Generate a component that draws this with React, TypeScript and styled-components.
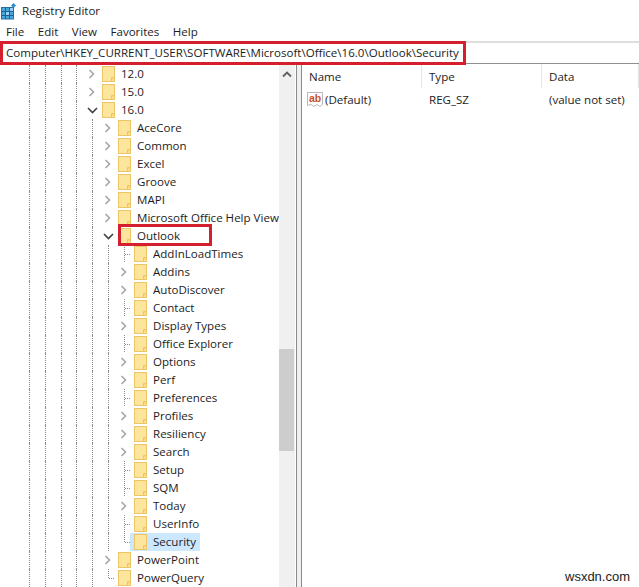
import React from "react";
import styled, { createGlobalStyle } from "styled-components";

const Global = createGlobalStyle`
  html, body { margin: 0; padding: 0; background: #fff; }
  body { font-family: "Open Sans", "Noto Sans", sans-serif; font-size: 11.55px; color: #1c1c1c; }
`;

const Window = styled.div`
  position: relative;
  width: 639px;
  height: 587px;
  overflow: hidden;
  display: flex;
  flex-direction: column;
  background: #fff;
`;
const TitleBar = styled.div`
  height: 21px;
  display: flex;
  align-items: center;
  gap: 5px;
  padding-left: 1px;
`;
const Title = styled.span``;
const MenuBar = styled.div`
  height: 20px;
  display: flex;
  align-items: center;
  padding: 1px 0 0 6px;
  box-sizing: border-box;
  gap: 13.5px;
`;
const MenuItem = styled.span``;
const AddressBar = styled.div`
  height: 23px;
  box-sizing: border-box;
  display: flex;
  align-items: center;
  padding-left: 6px;
  padding-bottom: 1px;
  border-top: 2px solid #dedede;
  border-bottom: 1px solid #8f8f8f;
  white-space: nowrap;
`;
const Main = styled.div`
  flex: 1;
  display: flex;
  min-height: 0;
`;
const TreePane = styled.div`
  width: 279px;
  flex: none;
  overflow: hidden;
  padding-top: 1px;
`;
const Row = styled.div`
  display: flex;
  height: 18px;
  padding-left: 29px;
  white-space: nowrap;
`;
const BaseGuide = styled.div`
  width: 15.75px;
  flex: none;
  border-left: 1px dotted #8a8a8a;
  box-sizing: border-box;
`;
const LevelGuide = styled.div`
  width: 16px;
  flex: none;
  border-left: 1px dotted #8a8a8a;
  box-sizing: border-box;
`;
const ExpanderIcon = styled.svg`
  width: 18px;
  height: 18px;
  flex: none;
  margin-left: -8px;
`;
const Item = styled.div<{ $selected?: boolean }>`
  display: flex;
  align-items: center;
  height: 18px;
  margin-left: -4px;
  padding: 0 4px;
  background: ${(p) => (p.$selected ? "#cce8ff" : "transparent")};
`;
const FolderIcon = styled.svg`
  width: 13px;
  height: 16px;
  flex: none;
`;
const Label = styled.span`
  margin-left: 6px;
  line-height: 18px;
`;
const Scrollbar = styled.div`
  width: 16px;
  flex: none;
  background: #f0f0f0;
  display: flex;
  flex-direction: column;
`;
const ScrollUp = styled.svg`
  width: 16px;
  height: 17px;
  flex: none;
  margin-top: 2px;
`;
const Thumb = styled.div`
  height: 102px;
  margin-top: 266px;
  margin-right: 1px;
  background: #cdcdcd;
`;
const Splitter = styled.div`
  width: 4px;
  flex: none;
  margin-left: 1px;
  background: #f0f0f0;
  border-left: 1px solid #8a8a8a;
  border-right: 1px solid #8a8a8a;
`;
const ListPane = styled.div`
  flex: 1;
  min-width: 0;
`;
const ColGrid = styled.div`
  display: grid;
  grid-template-columns: 120px 120px 1fr;
`;
const HeaderCell = styled.div`
  height: 24px;
  display: flex;
  align-items: center;
  padding: 1px 0 0 7px;
  box-sizing: border-box;
  border-right: 1px solid #e5e5e5;
  &:last-child { border-right: none; }
`;
const DataCell = styled.div<{ $first?: boolean }>`
  height: 22px;
  display: flex;
  align-items: center;
  gap: 2px;
  padding-left: ${(p) => (p.$first ? "5px" : "7px")};
  white-space: nowrap;
`;
const Highlight = styled.div`
  position: absolute;
  box-sizing: border-box;
  border: 3px solid #d4202e;
`;
const AddressHighlight = styled(Highlight)`
  left: 0;
  top: 41px;
  width: 466px;
  height: 24px;
`;
const OutlookHighlight = styled(Highlight)`
  left: 118px;
  top: 224px;
  width: 94px;
  height: 22px;
`;
const Watermark = styled.div`
  position: absolute;
  left: 565px;
  top: 569px;
  font-family: "Liberation Sans", Arial, sans-serif;
  font-size: 13px;
  line-height: 16px;
  color: #222;
`;

const Folder = () => (
  <FolderIcon viewBox="0 0 13 16">
    <rect x="0.5" y="0.5" width="12" height="15" fill="#fde59c" stroke="#ecc568" />
    <path d="M9.5 15.5V11.5H12.5" fill="#f9d67c" stroke="#ecc568" />
  </FolderIcon>
);

type Kind = "closed" | "open" | "leaf" | "last";

const Expander = ({ kind }: { kind: Kind }) => (
  <ExpanderIcon viewBox="0 0 18 18">
    {kind === "closed" && <path d="M5.5 5l4 4-4 4" fill="none" stroke="#a6a6a6" strokeWidth="1.6" />}
    {kind === "open" && <path d="M4 7l4.5 4.5L13 7" fill="none" stroke="#404040" strokeWidth="1.6" />}
    {(kind === "leaf" || kind === "last") && (
      <g stroke="#8a8a8a" strokeDasharray="1 1" shapeRendering="crispEdges">
        <line x1="8.5" y1="0" x2="8.5" y2={kind === "leaf" ? 18 : 9} />
        <line x1="9" y1="9.5" x2="15" y2="9.5" />
      </g>
    )}
  </ExpanderIcon>
);

type Node = { name: string; level: number; kind: Kind; selected?: boolean };

const nodes: Node[] = [
  { name: "12.0", level: 0, kind: "closed" },
  { name: "15.0", level: 0, kind: "closed" },
  { name: "16.0", level: 0, kind: "open" },
  { name: "AceCore", level: 1, kind: "closed" },
  { name: "Common", level: 1, kind: "closed" },
  { name: "Excel", level: 1, kind: "closed" },
  { name: "Groove", level: 1, kind: "closed" },
  { name: "MAPI", level: 1, kind: "closed" },
  { name: "Microsoft Office Help Viewer", level: 1, kind: "closed" },
  { name: "Outlook", level: 1, kind: "open" },
  { name: "AddInLoadTimes", level: 2, kind: "leaf" },
  { name: "Addins", level: 2, kind: "closed" },
  { name: "AutoDiscover", level: 2, kind: "closed" },
  { name: "Contact", level: 2, kind: "leaf" },
  { name: "Display Types", level: 2, kind: "closed" },
  { name: "Office Explorer", level: 2, kind: "leaf" },
  { name: "Options", level: 2, kind: "closed" },
  { name: "Perf", level: 2, kind: "closed" },
  { name: "Preferences", level: 2, kind: "leaf" },
  { name: "Profiles", level: 2, kind: "closed" },
  { name: "Resiliency", level: 2, kind: "closed" },
  { name: "Search", level: 2, kind: "closed" },
  { name: "Setup", level: 2, kind: "leaf" },
  { name: "SQM", level: 2, kind: "leaf" },
  { name: "Today", level: 2, kind: "closed" },
  { name: "UserInfo", level: 2, kind: "leaf" },
  { name: "Security", level: 2, kind: "last", selected: true },
  { name: "PowerPoint", level: 1, kind: "closed" },
  { name: "PowerQuery", level: 1, kind: "last" },
];

const AppIcon = () => (
  <svg width="16" height="18" viewBox="0 0 16 18">
    <path d="M12.5 1l2.5 2.5L12.5 6 10 3.5z" fill="#2f8fd0" />
    <rect x="0.5" y="5.5" width="12" height="11.5" fill="#4aa8e0" stroke="#2b6f9f" />
    <path d="M4.5 5.5V17M8.5 5.5V17M0.5 9.5H12.5M0.5 13.5H12.5" stroke="#1e5f8c" fill="none" />
    <rect x="5" y="10" width="3" height="3" fill="#9bd4f5" />
    <rect x="9" y="6" width="3" height="3" fill="#9bd4f5" />
  </svg>
);

const StringIcon = () => (
  <svg width="16" height="16" viewBox="0 0 16 16" style={{ flex: "none" }}>
    <path d="M0.5 1.5H15.5V13.5L13 15.5L10 13.5L7 15.5L4 13.5L0.5 14.5Z" fill="#fff" stroke="#b8b8b8" />
    <text x="2" y="10.5" fontFamily="Liberation Sans, sans-serif" fontWeight="700" fontSize="10.5" fill="#c8502a">ab</text>
  </svg>
);

export default function App() {
  return (
    <Window>
      <Global />
      <TitleBar>
        <AppIcon />
        <Title>Registry Editor</Title>
      </TitleBar>
      <MenuBar>
        {["File", "Edit", "View", "Favorites", "Help"].map((m) => (
          <MenuItem key={m}>{m}</MenuItem>
        ))}
      </MenuBar>
      <AddressBar>Computer\HKEY_CURRENT_USER\SOFTWARE\Microsoft\Office\16.0\Outlook\Security</AddressBar>
      <Main>
        <TreePane>
          {nodes.map((n) => (
            <Row key={n.name}>
              <BaseGuide />
              <BaseGuide />
              <BaseGuide />
              <BaseGuide />
              {Array.from({ length: n.level }).map((_, i) => (
                <LevelGuide key={i} />
              ))}
              <Expander kind={n.kind} />
              <Item $selected={n.selected}>
                <Folder />
                <Label>{n.name}</Label>
              </Item>
            </Row>
          ))}
        </TreePane>
        <Scrollbar>
          <ScrollUp viewBox="0 0 16 17">
            <path d="M4 10.5l4-4 4 4" fill="none" stroke="#606060" strokeWidth="1.8" />
          </ScrollUp>
          <Thumb />
        </Scrollbar>
        <Splitter />
        <ListPane>
          <ColGrid>
            <HeaderCell>Name</HeaderCell>
            <HeaderCell>Type</HeaderCell>
            <HeaderCell>Data</HeaderCell>
            <DataCell $first>
              <StringIcon />
              (Default)
            </DataCell>
            <DataCell>REG_SZ</DataCell>
            <DataCell>(value not set)</DataCell>
          </ColGrid>
        </ListPane>
      </Main>
      <AddressHighlight />
      <OutlookHighlight />
      <Watermark>wsxdn.com</Watermark>
    </Window>
  );
}
